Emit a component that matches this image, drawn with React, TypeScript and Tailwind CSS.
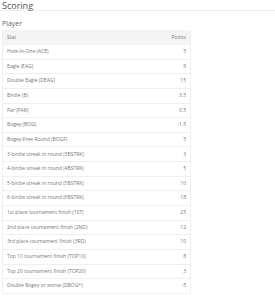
import React from "react";

const rows: [string, string][] = [
  ["Hole-In-One (ACE)", "5"],
  ["Eagle (EAG)", "9"],
  ["Double Eagle (DEAG)", "15"],
  ["Birdie (B)", "3.5"],
  ["Par (PAR)", "0.5"],
  ["Bogey (BOG)", "-1.5"],
  ["Bogey-Free Round (BOGF)", "5"],
  ["3-birdie streak in round (3BSTRK)", "3"],
  ["4-birdie streak in round (4BSTRK)", "5"],
  ["5-birdie streak in round (5BSTRK)", "10"],
  ["6-birdie streak in round (6BSTRK)", "18"],
  ["1st place tournament finish (1ST)", "25"],
  ["2nd place tournament finish (2ND)", "12"],
  ["3rd place tournament finish (3RD)", "10"],
  ["Top 10 tournament finish (TOP10)", "8"],
  ["Top 20 tournament finish (TOP20)", "3"],
  ["Double Bogey or worse (DBOG+)", "-5"],
];

export default function App() {
  return (
    <div
      className="w-[275px] h-[300px] overflow-hidden bg-white text-[#666] antialiased"
      style={{ fontFamily: '"Open Sans", sans-serif' }}
    >
      <div className="pl-[2px] h-[11px] border-b border-[#eeeeee]">
        <div className="text-[9px] leading-[11px] text-[#555]">Scoring</div>
      </div>
      <div className="pl-[2px] pt-[8px] text-[7px] leading-[10px] text-[#666]">Player</div>
      <div className="ml-[2px] mt-[1px] w-[189px] border-x border-[#efefef]">
        <div className="flex items-center justify-between h-[15px] px-[4px] bg-[#f4f4f4] text-[5px] text-[#777]">
          <span>Stat</span>
          <span>Points</span>
        </div>
        {rows.map(([s, p]) => (
          <div
            key={s}
            className="flex items-center justify-between h-[14.65px] px-[4px] border-b border-[#efefef] text-[5px] text-[#777]"
          >
            <span>{s}</span>
            <span className="text-[#777]">{p}</span>
          </div>
        ))}
      </div>
    </div>
  );
}
